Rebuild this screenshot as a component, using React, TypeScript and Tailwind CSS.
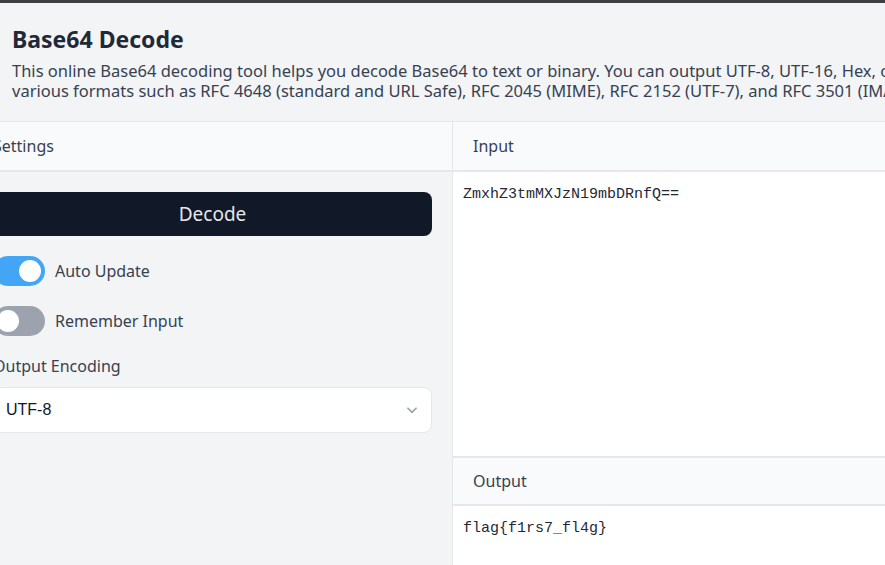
import React from "react";

const Toggle = ({ on }: { on: boolean }) => (
  <div
    className={`flex h-[30px] w-[52px] shrink-0 items-center rounded-full px-[4px] ${
      on ? "justify-end bg-[#42a5f5]" : "justify-start bg-[#9ca3af]"
    }`}
  >
    <div className="h-[22px] w-[22px] rounded-full bg-white" />
  </div>
);

const App = () => {
  return (
    <div
      className="flex h-[565px] w-[885px] flex-col overflow-hidden bg-white text-[#374151]"
      style={{ fontFamily: '"Noto Sans", sans-serif' }}
    >
      <div className="h-[3px] bg-[#3f3f46]" />

      <header className="border-b border-[#e5e7eb] bg-[#f3f4f6] px-3 pt-[22px] pb-[20px]">
        <h1 className="text-[23px] font-bold leading-7 text-[#1f2937]">Base64 Decode</h1>
        <p className="mt-[8px] whitespace-nowrap text-[16.5px] leading-5 text-[#374151]">
          This online Base64 decoding tool helps you decode Base64 to text or binary. You can output UTF-8, UTF-16, Hex, or ASCII.
          <br />
          various formats such as RFC 4648 (standard and URL Safe), RFC 2045 (MIME), RFC 2152 (UTF-7), and RFC 3501 (IMAP).
        </p>
      </header>

      <div className="flex min-h-0 flex-1">
        {/* settings */}
        <section className="-ml-[27px] flex w-[479px] shrink-0 flex-col bg-[#f3f4f6]">
          <div className="flex h-[50px] items-center border-b-2 border-[#e5e7eb] bg-[#f9fafb] px-5 text-[16px]">
            Settings
          </div>
          <div className="flex flex-col px-5 pt-[20px]">
            <button className="h-[44px] rounded-lg bg-[#111827] text-[19px] text-[#e5e7eb]">Decode</button>
            <div className="mt-[20px] flex items-center gap-[10px]">
              <Toggle on />
              <span className="text-[16px]">Auto Update</span>
            </div>
            <div className="mt-[20px] flex items-center gap-[10px]">
              <Toggle on={false} />
              <span className="text-[16px]">Remember Input</span>
            </div>
            <div className="mt-[18px] text-[16px] leading-6">Output Encoding</div>
            <div className="mt-[9px] flex h-[46px] items-center justify-between rounded-lg border border-[#e5e7eb] bg-white pl-3 pr-[12px]">
              <span className="text-[16px] text-[#111827]" style={{ fontFamily: '"Liberation Sans", sans-serif' }}>
                UTF-8
              </span>
              <svg width="14" height="14" viewBox="0 0 24 24" fill="none" stroke="#9ca3af" strokeWidth="3" strokeLinecap="round" strokeLinejoin="round">
                <path d="M5 9l7 7 7-7" />
              </svg>
            </div>
          </div>
        </section>

        {/* input / output */}
        <section className="flex min-w-0 flex-1 flex-col border-l border-[#e5e7eb]">
          <div className="flex h-[50px] shrink-0 items-center border-b-2 border-[#e5e7eb] bg-[#f9fafb] px-5 text-[16px]">
            Input
          </div>
          <div
            className="h-[284px] shrink-0 bg-white px-[10px] pt-[12px] text-[15px] text-[#1f2937]"
            style={{ fontFamily: '"Liberation Mono", monospace' }}
          >
            ZmxhZ3tmMXJzN19mbDRnfQ==
          </div>
          <div className="flex h-[50px] shrink-0 items-center border-y-2 border-[#e5e7eb] bg-[#f9fafb] px-5 text-[16px]">
            Output
          </div>
          <div
            className="flex-1 bg-white px-[10px] pt-[12px] text-[15px] text-[#1f2937]"
            style={{ fontFamily: '"Liberation Mono", monospace' }}
          >
            flag{"{"}f1rs7_fl4g{"}"}
          </div>
        </section>
      </div>
    </div>
  );
};

export default App;
